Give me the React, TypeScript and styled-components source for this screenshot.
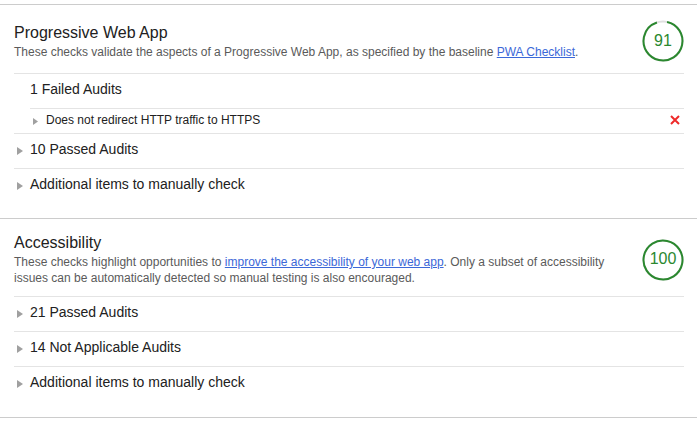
import React from 'react';
import styled, { createGlobalStyle } from 'styled-components';

const GlobalStyle = createGlobalStyle`
  html, body {
    margin: 0;
    padding: 0;
    background: #fff;
  }
  body {
    font-family: "Liberation Sans", Arial, sans-serif;
    color: #212121;
  }
`;

const Page = styled.div`
  padding-top: 4px;
  width: 697px;
`;

const Category = styled.section<{ last?: boolean }>`
  border-top: 1px solid #cccccc;
  border-bottom: ${(props) => (props.last ? '1px solid #cccccc' : 'none')};
  padding-bottom: ${(props) => (props.last ? '16px' : '15px')};
`;

const Header = styled.div`
  display: flex;
  align-items: center;
  padding: 14px 14px 10px 14px;
`;

const HeaderText = styled.div`
  flex: 1;
  padding-right: 24px;
`;

const Title = styled.div`
  font-size: 16px;
  line-height: 20px;
  color: #212121;
`;

const Description = styled.div`
  font-size: 12px;
  line-height: 16px;
  color: #5a5a5a;
  margin-top: 1px;

  a {
    color: #3b68d8;
    text-decoration: underline;
  }
`;

const GaugeBox = styled.div`
  width: 44px;
  height: 44px;
  position: relative;
  flex-shrink: 0;
  margin-right: -2px;
`;

const GaugeLabel = styled.div`
  position: absolute;
  inset: 0;
  display: flex;
  align-items: center;
  justify-content: center;
  font-size: 16px;
  color: #2b882f;
  padding-bottom: 1px;
`;

const Group = styled.div`
  margin: 0 13px 0 14px;
  border-top: 1px solid #e4e4e4;
`;

const GroupSummary = styled.div`
  display: flex;
  align-items: center;
  padding: 5px 0 9px;
  font-size: 14px;
  line-height: 20px;
  color: #212121;
`;

const ArrowBox = styled.span<{ hidden?: boolean; small?: boolean }>`
  width: 16px;
  flex-shrink: 0;
  display: flex;
  align-items: center;
  padding-left: 3px;
  padding-top: ${(props) => (props.small ? '2px' : '3px')};
  box-sizing: border-box;
  visibility: ${(props) => (props.hidden ? 'hidden' : 'visible')};
`;

const AuditList = styled.div`
  margin-left: 16px;
`;

const AuditRow = styled.div`
  display: flex;
  align-items: center;
  border-top: 1px solid #e4e4e4;
  padding: 3px 4px 5px 0;
  font-size: 12px;
  line-height: 16px;
  color: #212121;
`;

const AuditTitle = styled.span`
  flex: 1;
`;

const Arrow = ({ small }: { small?: boolean }) =>
  small ? (
    <svg width="6" height="7" viewBox="0 0 6 7">
      <polygon points="0,0 5,3.5 0,7" fill="#a0a0a0" />
    </svg>
  ) : (
    <svg width="6" height="8" viewBox="0 0 6 8">
      <polygon points="0,0 6,4 0,8" fill="#a0a0a0" />
    </svg>
  );

const FailIcon = () => (
  <svg width="10" height="10" viewBox="0 0 10 10">
    <path d="M1 1 L9 9 M9 1 L1 9" stroke="#ee2a2a" strokeWidth="2" />
  </svg>
);

const Gauge = ({ score }: { score: number }) => {
  const r = 19.5;
  const c = 2 * Math.PI * r;
  const filled = (score / 100) * c;
  // the gray remainder sits a little left of the top, as in the report
  return (
    <GaugeBox>
      <svg width="44" height="44" viewBox="0 0 44 44">
        <circle cx="22" cy="22" r={r} fill="none" stroke="#e0e0e0" strokeWidth="2" />
        <circle
          cx="22"
          cy="22"
          r={r}
          fill="none"
          stroke="#2b882f"
          strokeWidth="2"
          strokeDasharray={`${filled} ${c}`}
          transform="rotate(-78 22 22)"
        />
      </svg>
      <GaugeLabel>{score}</GaugeLabel>
    </GaugeBox>
  );
};

const GroupRow = ({ label, open }: { label: string; open?: boolean }) => (
  <GroupSummary>
    <ArrowBox hidden={open}>
      <Arrow />
    </ArrowBox>
    {label}
  </GroupSummary>
);

export default function App() {
  return (
    <>
      <GlobalStyle />
      <Page>
        <Category>
          <Header>
            <HeaderText>
              <Title>Progressive Web App</Title>
              <Description>
                These checks validate the aspects of a Progressive Web App, as specified by the baseline{' '}
                <a href="#">PWA Checklist</a>.
              </Description>
            </HeaderText>
            <Gauge score={91} />
          </Header>
          <Group>
            <GroupRow label="1 Failed Audits" open />
            <AuditList>
              <AuditRow>
                <ArrowBox small>
                  <Arrow small />
                </ArrowBox>
                <AuditTitle>Does not redirect HTTP traffic to HTTPS</AuditTitle>
                <FailIcon />
              </AuditRow>
            </AuditList>
          </Group>
          <Group>
            <GroupRow label="10 Passed Audits" />
          </Group>
          <Group>
            <GroupRow label="Additional items to manually check" />
          </Group>
        </Category>
        <Category last>
          <Header>
            <HeaderText>
              <Title>Accessibility</Title>
              <Description>
                These checks highlight opportunities to{' '}
                <a href="#">improve the accessibility of your web app</a>. Only a subset of accessibility
                issues can be automatically detected so manual testing is also encouraged.
              </Description>
            </HeaderText>
            <Gauge score={100} />
          </Header>
          <Group>
            <GroupRow label="21 Passed Audits" />
          </Group>
          <Group>
            <GroupRow label="14 Not Applicable Audits" />
          </Group>
          <Group>
            <GroupRow label="Additional items to manually check" />
          </Group>
        </Category>
      </Page>
    </>
  );
}
